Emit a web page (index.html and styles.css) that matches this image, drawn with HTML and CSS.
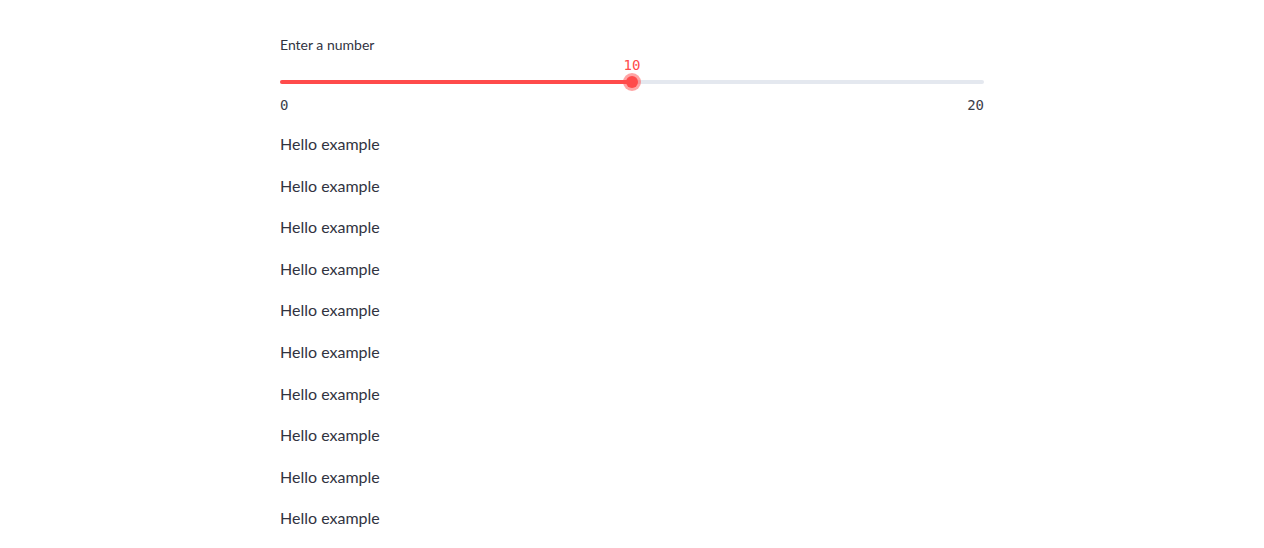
FILE: index.html
```html
<!DOCTYPE html>
<html>
<head>
<meta charset="utf-8">
<link rel="stylesheet" href="styles.css">
</head>
<body>
<div class="main">
  <div class="slider-widget">
    <div class="slider-label">Enter a number</div>
    <div class="slider">
      <div class="track" style="--pct: 50%;">
        <div class="fill"></div>
        <div class="thumb">
          <div class="thumb-value">10</div>
        </div>
      </div>
    </div>
    <div class="ticks">
      <span>0</span>
      <span>20</span>
    </div>
  </div>
  <div class="content">
    <p>Hello example</p>
    <p>Hello example</p>
    <p>Hello example</p>
    <p>Hello example</p>
    <p>Hello example</p>
    <p>Hello example</p>
    <p>Hello example</p>
    <p>Hello example</p>
    <p>Hello example</p>
    <p>Hello example</p>
  </div>
</div>
</body>
</html>
```
FILE: styles.css
```css
html, body {
  margin: 0;
  padding: 0;
  background: #ffffff;
}
body {
  font-family: Lato, "Noto Sans", sans-serif;
  color: rgb(49, 51, 63);
  overflow: hidden;
}
.main {
  width: 704px;
  margin: 0 auto;
  padding-top: 33px;
}
.slider-label {
  font-size: 14px;
  line-height: 24px;
  height: 24px;
  margin-bottom: 4px;
}
.slider {
  padding-top: 19px;
}
.track {
  position: relative;
  height: 4px;
  border-radius: 2px;
  background: #e4e8ef;
}
.fill {
  width: var(--pct);
  height: 100%;
  border-radius: 2px;
  background: #ff4b4b;
}
.thumb {
  position: absolute;
  left: var(--pct);
  top: 50%;
  width: 12px;
  height: 12px;
  margin-left: -6px;
  margin-top: -6px;
  border-radius: 50%;
  background: #ff4b4b;
  box-shadow: 0 0 0 3px rgba(255, 75, 75, 0.5);
}
.thumb-value {
  position: absolute;
  left: 50%;
  bottom: 15px;
  transform: translateX(-50%);
  font-family: "DejaVu Sans Mono", "Liberation Mono", monospace;
  font-size: 14px;
  line-height: 16px;
  color: #ff4b4b;
  white-space: nowrap;
}
.ticks {
  display: flex;
  justify-content: space-between;
  margin-top: 11px;
  font-family: "DejaVu Sans Mono", "Liberation Mono", monospace;
  font-size: 14px;
  line-height: 20px;
  color: rgb(60, 62, 74);
}
.content {
  padding-top: 16px;
}
.content p {
  margin: 0 0 16px 0;
  font-size: 16px;
  line-height: 25.6px;
}
```
